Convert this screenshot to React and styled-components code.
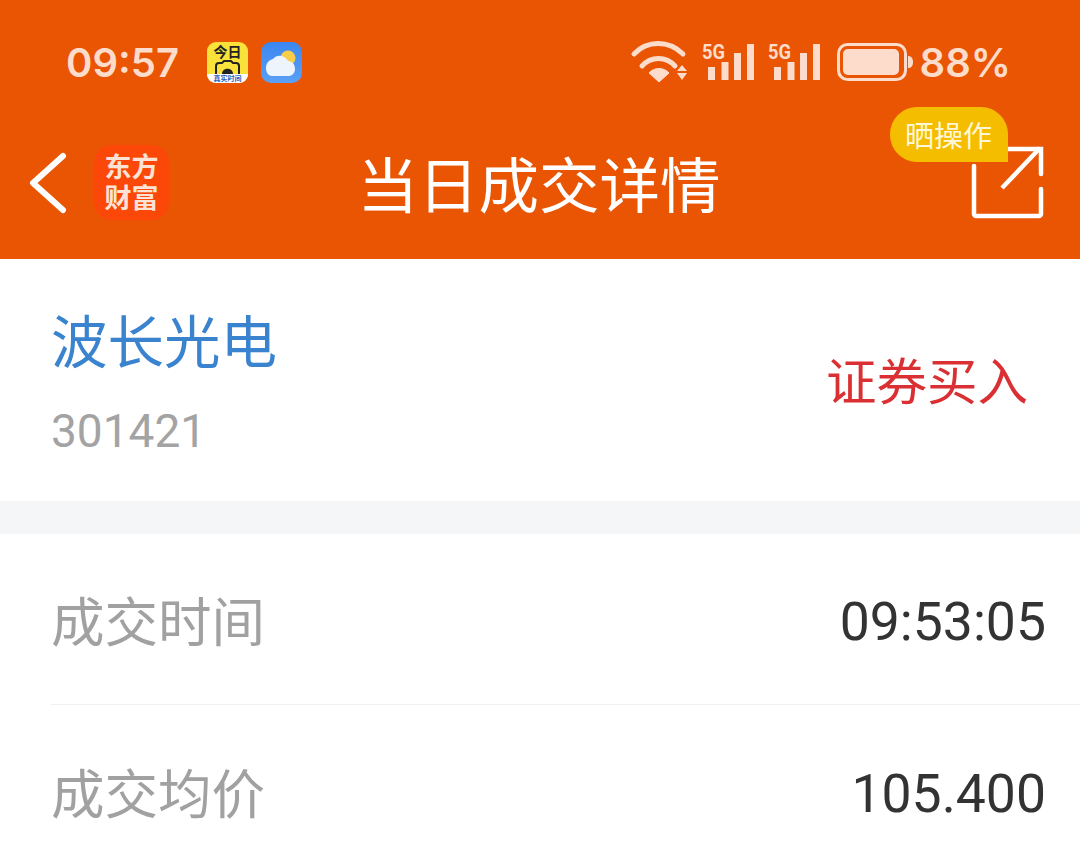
import React from "react";
import styled, { createGlobalStyle } from "styled-components";

const GlobalStyle = createGlobalStyle`
  html, body {
    margin: 0;
    padding: 0;
    background: #fff;
    overflow: hidden;
  }
  body {
    font-family: "Roboto", "Noto Sans CJK SC", sans-serif;
  }
`;

const Page = styled.div`
  width: 1080px;
  height: 861px;
  overflow: hidden;
  background: #fff;
`;

const Header = styled.header`
  height: 259px;
  background: #ea5504;
  display: flex;
  flex-direction: column;
`;

const StatusBar = styled.div`
  height: 122px;
  box-sizing: border-box;
  padding: 2px 69px 0 66px;
  display: flex;
  align-items: center;
  justify-content: space-between;
  color: #fddccb;
`;

const StatusGroup = styled.div`
  display: flex;
  align-items: center;
  gap: ${props => props.$gap || 0}px;
`;

const Clock = styled.span`
  font-family: "Inter", sans-serif;
  font-size: 40px;
  font-weight: 600;
  margin-right: 15px;
`;

const Percent = styled.span`
  font-family: "Inter", sans-serif;
  font-size: 40px;
  font-weight: 600;
  margin-left: -7px;
`;

const BatteryBox = styled.span`
  display: flex;
  margin-left: 3px;
`;

const NavBar = styled.div`
  flex: 1;
  display: flex;
  align-items: center;
  justify-content: space-between;
  padding: 0 36px 16px 28px;
  position: relative;
`;

const NavLeft = styled.div`
  display: flex;
  align-items: center;
  gap: 26px;
`;

const AppLogo = styled.div`
  width: 75px;
  height: 75px;
  box-sizing: border-box;
  padding-bottom: 4px;
  border-radius: 18px;
  background: #fb4707;
  color: #fde3d6;
  font-family: "Noto Sans CJK SC", sans-serif;
  font-weight: 700;
  font-size: 27px;
  line-height: 31px;
  text-align: center;
  display: flex;
  align-items: center;
  justify-content: center;
`;

const Title = styled.h1`
  position: absolute;
  left: 0;
  right: 2px;
  top: 18px;
  margin: 0;
  text-align: center;
  color: #fff;
  font-family: "Noto Sans CJK SC", sans-serif;
  font-size: 60.5px;
  line-height: 84px;
  font-weight: 400;
  pointer-events: none;
`;

const ShareWrap = styled.div`
  position: relative;
  width: 76px;
  height: 76px;
`;

const Badge = styled.div`
  position: absolute;
  right: 36px;
  top: -38px;
  width: 118px;
  height: 55px;
  box-sizing: border-box;
  padding-left: 15px;
  background: #f5bd00;
  border-radius: 27px 27px 0 27px;
  color: #fff8d8;
  font-family: "Noto Sans CJK SC", sans-serif;
  font-size: 29px;
  line-height: 55px;
  white-space: nowrap;
`;

const StockCard = styled.section`
  height: 242px;
  box-sizing: border-box;
  padding: 40px 52px 0 51px;
  display: flex;
  justify-content: space-between;
`;

const StockName = styled.div`
  font-family: "Noto Sans CJK SC", sans-serif;
  font-size: 56.5px;
  line-height: 78px;
  color: #3a83cf;
`;

const StockCode = styled.div`
  margin-top: 28px;
  font-size: 46px;
  line-height: 52px;
  color: #a3a3a3;
`;

const Direction = styled.div`
  font-family: "Noto Sans CJK SC", sans-serif;
  font-size: 50.5px;
  line-height: 70px;
  color: #da3033;
  margin: 44px 0 0;
`;

const Gap = styled.div`
  height: 33px;
  background: #f5f6f8;
`;

const Row = styled.div`
  height: 171px;
  box-sizing: border-box;
  margin-left: 51px;
  padding: 4px 34px 0 0;
  display: flex;
  align-items: center;
  justify-content: space-between;
  border-bottom: ${props => (props.$last ? "none" : "1px solid #f0f0f0")};
`;

const RowLabel = styled.span`
  font-family: "Noto Sans CJK SC", sans-serif;
  font-size: 53.5px;
  color: #a1a1a1;
  margin-bottom: 5px;
`;

const RowValue = styled.span`
  font-size: 53.5px;
  color: #333;
  margin-top: 1px;
`;

const WifiIcon = () => (
  <svg width="58" height="42" viewBox="0 0 58 42" fill="none">
    <path d="M4 13C17 -1 39 -1 53 13" stroke="#fddccb" strokeWidth="5" strokeLinecap="round" />
    <path d="M12 25C21 15 36 15 45 25" stroke="#fddccb" strokeWidth="5" strokeLinecap="round" />
    <path d="M19 32C24 26 34 26 39 32L29 41Z" fill="#fddccb" stroke="#fddccb" strokeWidth="1" strokeLinejoin="round" />
    <path d="M47 30L52 24L57 30ZM47 32H57L52 39Z" fill="#fddccb" />
  </svg>
);

const SignalIcon = () => (
  <svg width="52" height="46" viewBox="0 -4 52 46" fill="none">
    <text x="0" y="16" fontFamily="Roboto" fontWeight="700" fontSize="20" textLength="23" lengthAdjust="spacingAndGlyphs" fill="#fddccb">5G</text>
    <rect x="6" y="24" width="7" height="13" fill="#fddccb" />
    <rect x="19.500" y="19" width="7" height="18" fill="#fddccb" />
    <rect x="32" y="10" width="7" height="27" fill="#fddccb" />
    <rect x="45" y="1" width="7" height="36" fill="#fddccb" />
  </svg>
);

const BatteryIcon = () => (
  <svg width="76" height="38" viewBox="0 0 76 38" fill="none">
    <rect x="1.500" y="1.500" width="67" height="35" rx="9" stroke="#fddccb" strokeWidth="3" />
    <rect x="6" y="6" width="56" height="26" rx="5" fill="#fddccb" />
    <path d="M71 13C74 13 76 15 76 19C76 23 74 25 71 25Z" fill="#fddccb" />
  </svg>
);

const TodayIcon = () => (
  <svg width="41" height="41" viewBox="0 0 41 41">
    <rect width="41" height="41" rx="9" fill="#f9e33a" />
    <path d="M0 32H41C41 37 37 41 32 41H9C4 41 0 37 0 32Z" fill="#fff" />
    <text x="20.500" y="15" textAnchor="middle" fontFamily="Noto Sans CJK SC" fontWeight="700" fontSize="14" fill="#222">今日</text>
    <path d="M9 32V24C9 22 10 21 12 21H15L17 19H24L26 21H29C31 21 32 22 32 24V32" fill="none" stroke="#222" strokeWidth="2" />
    <path d="M15 32C15 25 26 25 26 32Z" fill="#222" />
    <text x="20.500" y="39" textAnchor="middle" fontFamily="Noto Sans CJK SC" fontWeight="700" fontSize="7" fill="#2a5fc0">真实时间</text>
  </svg>
);

const WeatherIcon = () => (
  <svg width="41" height="41" viewBox="0 0 41 41">
    <defs>
      <linearGradient id="sky" x1="0" y1="0" x2="0" y2="1">
        <stop offset="0" stopColor="#3c86f0" />
        <stop offset="1" stopColor="#5aa0f5" />
      </linearGradient>
    </defs>
    <rect width="41" height="41" rx="10" fill="url(#sky)" />
    <circle cx="27" cy="16" r="7.500" fill="#f7cd4a" />
    <path d="M11 34C7 34 5 30 5 26C5 21 8 18 12 17C14 14 18 13 21 14C24 15 26 17 27 19C31 19 34 22 34 27C34 31 31 34 28 34Z" fill="#eef4fb" />
  </svg>
);

const BackIcon = () => (
  <svg width="40" height="62" viewBox="0 0 40 62" fill="none">
    <path d="M35 4L5 31L35 58" stroke="#fff" strokeWidth="6" strokeLinecap="round" strokeLinejoin="round" />
  </svg>
);

const ShareIcon = () => (
  <svg width="76" height="76" viewBox="0 0 76 76" fill="none">
    <path d="M6 21V69C6 70 7 71 8 71H71C72 71 73 70 73 69V44" stroke="#fff" strokeWidth="4.500" strokeLinecap="round" />
    <path d="M38 4H73V29" stroke="#fff" strokeWidth="4.500" strokeLinecap="round" />
    <path d="M34 43L72 3" stroke="#fff" strokeWidth="4.500" />
  </svg>
);

const rows = [
  { label: "成交时间", value: "09:53:05" },
  { label: "成交均价", value: "105.400" }
];

const App = () => {
  return (
    <Page>
      <GlobalStyle />
      <Header>
        <StatusBar>
          <StatusGroup $gap={13}>
            <Clock>09:57</Clock>
            <TodayIcon />
            <WeatherIcon />
          </StatusGroup>
          <StatusGroup $gap={14}>
            <WifiIcon />
            <SignalIcon />
            <SignalIcon />
            <BatteryBox>
              <BatteryIcon />
            </BatteryBox>
            <Percent>88%</Percent>
          </StatusGroup>
        </StatusBar>
        <NavBar>
          <NavLeft>
            <BackIcon />
            <AppLogo>东方<br />财富</AppLogo>
          </NavLeft>
          <Title>当日成交详情</Title>
          <ShareWrap>
            <ShareIcon />
            <Badge>晒操作</Badge>
          </ShareWrap>
        </NavBar>
      </Header>
      <StockCard>
        <div>
          <StockName>波长光电</StockName>
          <StockCode>301421</StockCode>
        </div>
        <Direction>证券买入</Direction>
      </StockCard>
      <Gap />
      {rows.map((row, index) => (
        <Row key={row.label} $last={index === rows.length - 1}>
          <RowLabel>{row.label}</RowLabel>
          <RowValue>{row.value}</RowValue>
        </Row>
      ))}
    </Page>
  );
};

export default App;
